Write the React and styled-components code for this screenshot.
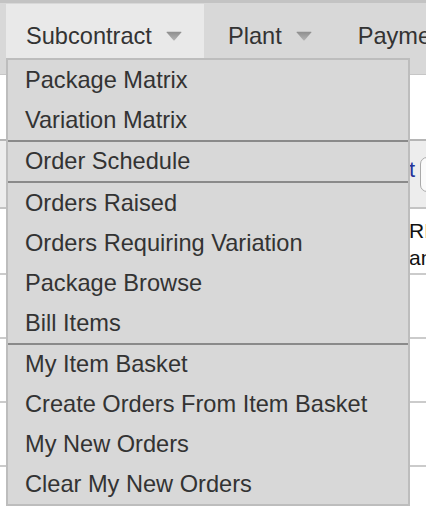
import React from "react";
import styled, { createGlobalStyle } from "styled-components";

const Global = createGlobalStyle`
  html, body {
    margin: 0;
    padding: 0;
    background: #ffffff;
    overflow: hidden;
    font-family: "Liberation Sans", Arial, Helvetica, sans-serif;
  }
  * { box-sizing: border-box; }
`;

const Page = styled.div`
  width: 426px;
  height: 506px;
  overflow: hidden;
  position: relative;
  background: #fff;
`;

const NavBar = styled.nav`
  display: flex;
  border-top: 3px solid #c3c3c3;
  border-bottom: 1px solid #c6c6c6;
  background: #d8d8d8;
  padding: 1px 0 16px 6px;
  white-space: nowrap;
`;

const NavItem = styled.div`
  position: relative;
  display: flex;
  align-items: center;
  flex-shrink: 0;
  height: 54px;
  padding: 10px 22px 0 ${(p) => (p.$active ? "20px" : "24px")};
  background: ${(p) => (p.$active ? "#e9e9e9" : "transparent")};
  color: #333;
  font-size: 23.6px;
  line-height: 27px;
`;

const CaretSvg = styled.svg`
  margin-left: 14px;
  margin-top: -1px;
  width: 16px;
  height: 10px;
  flex-shrink: 0;
`;

const Caret = ({ id }) => (
  <CaretSvg viewBox="0 0 16 10">
    <defs>
      <linearGradient id={id} x1="0" y1="0" x2="0" y2="1">
        <stop offset="0" stopColor="#8e8e8e" />
        <stop offset="1" stopColor="#b4b4b4" />
      </linearGradient>
    </defs>
    <path d="M1 0.8 H15 Q16 0.8 15.3 1.6 L8.6 9.2 Q8 9.8 7.4 9.2 L0.7 1.6 Q0 0.8 1 0.8 Z" fill={`url(#${id})`} />
  </CaretSvg>
);

const Dropdown = styled.div`
  position: absolute;
  left: 0;
  top: 100%;
  width: 404px;
  z-index: 10;
  background: #d8d8d8;
  border: 2px solid #bdbdbd;
`;

const Group = styled.div`
  border-top: ${(p) => (p.$first ? "none" : "2px solid #8a8a8a")};
`;

const MenuItem = styled.div`
  display: flex;
  align-items: center;
  height: 39.8px;
  padding-left: 17px;
  padding-top: 1px;
  color: #333;
  font-size: 23.6px;
  white-space: nowrap;
`;

const WhiteGap = styled.div`
  height: 64px;
`;

const Toolbar = styled.div`
  display: flex;
  align-items: center;
  height: 70px;
  background: #ededed;
  border-top: 2px solid #b5b5b5;
  border-bottom: 2px solid #c4c4c4;
  white-space: nowrap;
`;

const ToolLink = styled.span`
  width: 415px;
  flex-shrink: 0;
  text-align: right;
  color: #26349a;
  font-size: 22px;
  margin-top: -8px;
`;

const ToolInput = styled.div`
  flex-shrink: 0;
  margin-left: 5px;
  width: 180px;
  height: 35px;
  border: 1.5px solid #a9a9a9;
  border-radius: 7px;
  background: #fafafa;
`;

const TableRow = styled.div`
  display: grid;
  grid-template-columns: 409px 1fr;
  height: ${(p) => (p.$header ? "66px" : "64px")};
  border-bottom: 2px solid #cbcbcb;
`;

const HeadCell = styled.div`
  padding-top: 8px;
  color: #111;
  font-size: 21px;
  line-height: 27px;
  white-space: nowrap;
`;

const groups = [
  ["Package Matrix", "Variation Matrix"],
  ["Order Schedule"],
  ["Orders Raised", "Orders Requiring Variation", "Package Browse", "Bill Items"],
  ["My Item Basket", "Create Orders From Item Basket", "My New Orders", "Clear My New Orders"],
];

export default function App() {
  return (
    <Page>
      <Global />
      <NavBar>
        <NavItem $active>
          Subcontract
          <Caret id="c1" />
          <Dropdown>
            {groups.map((g, i) => (
              <Group key={i} $first={i === 0}>
                {g.map((label) => (
                  <MenuItem key={label}>{label}</MenuItem>
                ))}
              </Group>
            ))}
          </Dropdown>
        </NavItem>
        <NavItem>
          Plant
          <Caret id="c2" />
        </NavItem>
        <NavItem>
          Payment
          <Caret id="c3" />
        </NavItem>
      </NavBar>
      <WhiteGap />
      <Toolbar>
        <ToolLink>Select Contract</ToolLink>
        <ToolInput />
      </Toolbar>
      <TableRow $header>
        <div />
        <HeadCell>
          RHS Code
          <br />
          and Name
        </HeadCell>
      </TableRow>
      <TableRow>
        <div />
        <div />
      </TableRow>
      <TableRow>
        <div />
        <div />
      </TableRow>
      <TableRow>
        <div />
        <div />
      </TableRow>
    </Page>
  );
}
